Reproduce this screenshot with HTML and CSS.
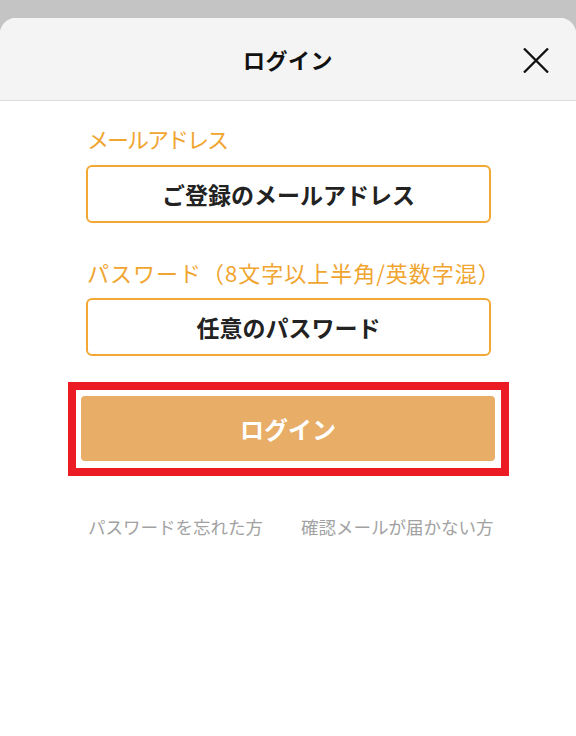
FILE: index.html
```html
<!DOCTYPE html>
<html lang="ja">
<head>
<meta charset="utf-8">
<title>ログイン</title>
<link rel="stylesheet" href="styles.css">
</head>
<body>
<div class="sheet">
  <header class="header">
    <span class="spacer"></span>
    <h1 class="title">ログイン</h1>
    <button class="close" aria-label="閉じる">
      <svg width="26" height="25" viewBox="0 0 26 25"><path d="M1 0.5 L25 24.5 M25 0.5 L1 24.5" stroke="#111" stroke-width="2.3" fill="none"/></svg>
    </button>
  </header>
  <main class="content">
    <label class="label first" for="email">メールアドレス</label>
    <input class="field" id="email" type="email" placeholder="ご登録のメールアドレス">
    <label class="label second" for="pw">パスワード（8文字以上半角/英数字混）</label>
    <input class="field" id="pw" type="password" placeholder="任意のパスワード">
    <div class="highlight">
      <button class="submit">ログイン</button>
    </div>
    <nav class="links">
      <a href="#">パスワードを忘れた方</a>
      <a href="#">確認メールが届かない方</a>
    </nav>
  </main>
</div>
</body>
</html>
```

FILE: styles.css
```css
* { box-sizing: border-box; }
html, body { margin: 0; padding: 0; }
body {
  background: #c4c4c4;
  font-family: "Noto Sans CJK JP", "Noto Sans", sans-serif;
  height: 736px;
  overflow: hidden;
}
.sheet {
  margin-top: 18px;
  background: #fff;
  border-radius: 16px 16px 0 0;
  height: 718px;
  overflow: hidden;
}
.header {
  height: 83px;
  background: #f4f4f4;
  border-bottom: 1px solid #dcdcdc;
  display: grid;
  grid-template-columns: 1fr auto 1fr;
  align-items: center;
  padding: 0 27px;
}
.title {
  margin: 0;
  font-size: 22px;
  font-weight: 700;
  color: #111;
  line-height: 1;
  letter-spacing: 0.5px;
}
.close {
  justify-self: end;
  background: none;
  border: 0;
  padding: 0;
  width: 26px;
  height: 25px;
  display: flex;
  margin-top: 2px;
}
.content {
  padding: 21px 85px 0 86px;
  display: flex;
  flex-direction: column;
}
.label {
  display: block;
  font-size: 22px;
  line-height: 32px;
  color: #f0a530;
  margin-left: 1px;
  white-space: nowrap;
}
.label.first { margin-bottom: 11px; letter-spacing: -2px; }
.label.second { margin-top: 33px; margin-bottom: 10px; letter-spacing: 1px; }
.field {
  width: 100%;
  height: 58px;
  border: 2px solid #f2a832;
  border-radius: 6px;
  background: #fff;
  text-align: center;
  font-family: inherit;
  font-size: 23px;
  font-weight: 700;
  color: #222;
  outline: none;
}
.field::placeholder {
  color: #222;
  opacity: 1;
  font-weight: 700;
}
.highlight {
  margin: 26px -18px 0 -18px;
  border: 8px solid #ec1c24;
  padding: 6px 6px 7px 5px;
}
.submit {
  width: 100%;
  height: 65px;
  border: 0;
  border-radius: 4px;
  background: #e8ad66;
  color: #fff;
  font-family: inherit;
  font-size: 24px;
  font-weight: 700;
  display: flex;
  align-items: center;
  justify-content: center;
}
.links {
  margin-top: 39px;
  display: flex;
  gap: 38px;
  padding-left: 2px;
}
.links a {
  font-size: 17.5px;
  line-height: 24px;
  color: #a2a2a2;
  text-decoration: none;
  white-space: nowrap;
}
```
